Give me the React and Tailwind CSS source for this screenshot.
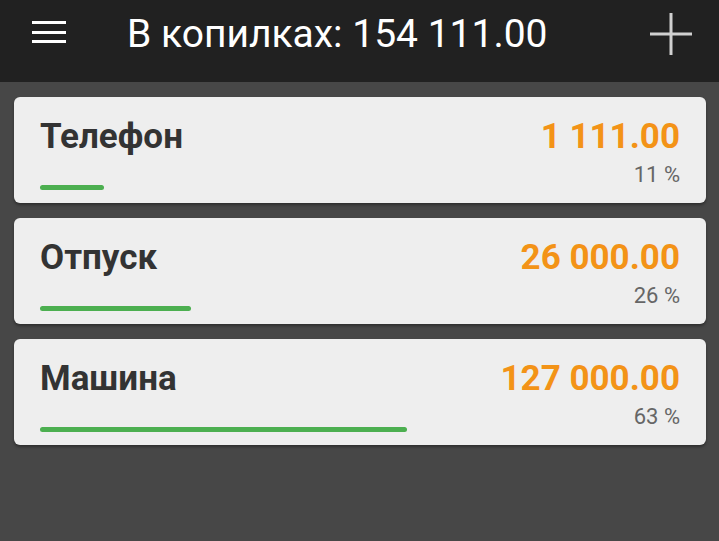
import React from "react";

const items = [
  { name: "Телефон", amount: "1 111.00", pct: 11 },
  { name: "Отпуск", amount: "26 000.00", pct: 26 },
  { name: "Машина", amount: "127 000.00", pct: 63 },
];

function Card({ name, amount, pct }) {
  return (
    <div className="h-[106px] rounded-[6px] bg-[#eeeeee] px-[26px] shadow-[0_2px_3px_rgba(0,0,0,0.35)] flex flex-col">
      <div className="mt-[22px] flex justify-between items-start h-[35px]">
        <span className="text-[35px] leading-none font-bold text-[#333333]">{name}</span>
        <span className="text-[35px] leading-none font-bold text-[#f39317]">{amount}</span>
      </div>
      <div className="mt-[10px] flex justify-between items-start">
        <div className="w-[582px] pt-[21px]">
          <div
            className="h-[5px] rounded-full bg-[#4caf50]"
            style={{ width: `${(pct / 100) * 582}px` }}
          />
        </div>
        <span className="text-[22px] leading-none text-[#666666]">{pct} %</span>
      </div>
    </div>
  );
}

export default function App() {
  return (
    <div
      className="w-[719px] h-[541px] bg-[#474747] overflow-hidden"
      style={{ fontFamily: "Roboto, 'Noto Sans', sans-serif" }}
    >
      <div className="h-[82px] bg-[#212121] flex items-start">
        <svg className="ml-[32px] mt-[21px]" width="34" height="23" viewBox="0 0 34 23">
          <rect x="0" y="0" width="34" height="3" fill="#ffffff" />
          <rect x="0" y="10" width="34" height="3" fill="#ffffff" />
          <rect x="0" y="19" width="34" height="3" fill="#ffffff" />
        </svg>
        <span className="ml-[61px] mt-[15px] text-[39px] leading-none text-white">
          В копилках: 154 111.00
        </span>
        <svg className="ml-auto mr-[27px] mt-[13px]" width="42" height="42" viewBox="0 0 42 42">
          <rect x="0" y="19.5" width="42" height="3" fill="#d0d0d0" />
          <rect x="19.5" y="0" width="3" height="42" fill="#d0d0d0" />
        </svg>
      </div>
      <div className="pr-[13px] pt-[15px] flex flex-col gap-[15px] pl-[14px]">
        {items.map((it) => (
          <Card key={it.name} {...it} />
        ))}
      </div>
    </div>
  );
}
